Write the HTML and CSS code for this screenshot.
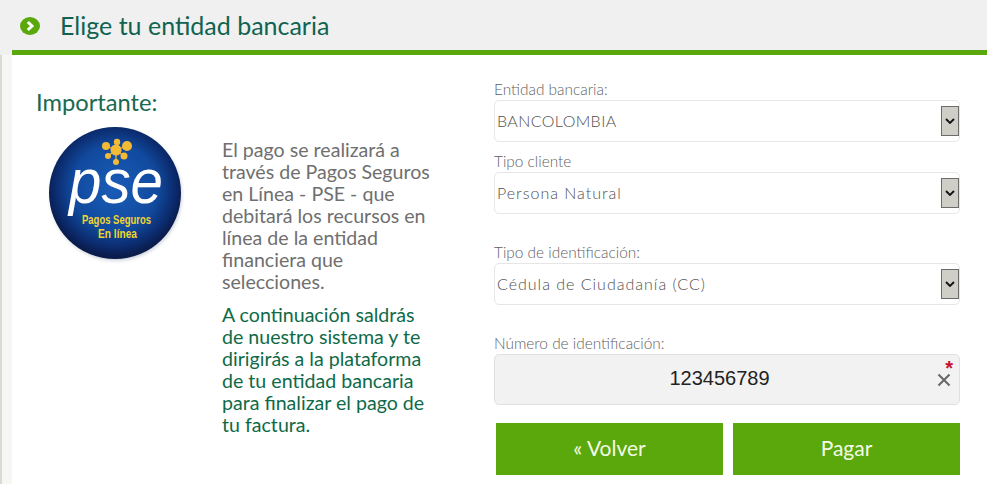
FILE: index.html
```html
<!DOCTYPE html>
<html lang="es">
<head>
<meta charset="utf-8">
<title>Elige tu entidad bancaria</title>
<link rel="stylesheet" href="styles.css">
</head>
<body>
<div class="page">
  <header class="head">
    <svg class="head-icon" width="20" height="18" viewBox="0 0 20 18"><ellipse cx="10" cy="9" rx="10" ry="9" fill="#5aa80c"/><path d="M7.800 5 12 9l-4.200 4" fill="none" stroke="#fff" stroke-width="3"/></svg>
    <h1>Elige tu entidad bancaria</h1>
  </header>
  <main class="content">
    <section class="info">
      <h2>Importante:</h2>
      <div class="info-body">
        <svg class="logo" width="136" height="140" viewBox="0 0 136 140">
          <defs>
            <radialGradient id="g" cx="50%" cy="46%" r="52%">
              <stop offset="0" stop-color="#1a5cb8"/>
              <stop offset=".62" stop-color="#114a9e"/>
              <stop offset=".88" stop-color="#0b2a6c"/>
              <stop offset="1" stop-color="#0a1c4c"/>
            </radialGradient>
            <radialGradient id="s" cx="50%" cy="50%" r="50%">
              <stop offset=".88" stop-color="#a4acbc"/>
              <stop offset="1" stop-color="#fff" stop-opacity="0"/>
            </radialGradient>
          </defs>
          <circle cx="68" cy="70" r="70" fill="url(#s)"/>
          <circle cx="67" cy="68" r="66" fill="url(#g)"/>
          <path d="M68 25 69 17M68 25 58 21M68 25 79 21M68 25 60 31M68 25 76 31M68 25 68 37" stroke="#f3bb35" stroke-width="1.200"/>
          <g fill="#f3bb35">
            <circle cx="69" cy="17" r="3.200"/><circle cx="58" cy="21" r="4"/><circle cx="79" cy="21" r="5"/>
            <circle cx="68" cy="25" r="5.500"/><circle cx="60" cy="31" r="3"/><circle cx="76" cy="31" r="3.500"/><circle cx="68" cy="37" r="3"/>
          </g>
          <text class="logo-pse" x="21" y="78" textLength="94" lengthAdjust="spacingAndGlyphs">pse</text>
          <text class="logo-sub" x="34" y="99" textLength="69" lengthAdjust="spacingAndGlyphs">Pagos Seguros</text>
          <text class="logo-sub" x="50" y="113" textLength="39" lengthAdjust="spacingAndGlyphs">En línea</text>
        </svg>
        <div class="copy">
          <p class="grey">El pago se realizará a<br>través de Pagos Seguros<br>en Línea - PSE - que<br>debitará los recursos en<br>línea de la entidad<br>financiera que<br>selecciones.</p>
          <p class="green">A continuación saldrás<br>de nuestro sistema y te<br>dirigirás a la plataforma<br>de tu entidad bancaria<br>para finalizar el pago de<br>tu factura.</p>
        </div>
      </div>
    </section>
    <section class="form">
      <div class="field">
        <label>Entidad bancaria:</label>
        <div class="select s-caps"><span>BANCOLOMBIA</span><i class="arrow"><svg width="10" height="6" viewBox="0 0 10 6"><path d="M1 1l4 4 4-4" fill="none" stroke="#111" stroke-width="1.800"/></svg></i></div>
      </div>
      <div class="field f2">
        <label>Tipo cliente</label>
        <div class="select"><span>Persona Natural</span><i class="arrow"><svg width="10" height="6" viewBox="0 0 10 6"><path d="M1 1l4 4 4-4" fill="none" stroke="#111" stroke-width="1.800"/></svg></i></div>
      </div>
      <div class="field f3">
        <label>Tipo de identificación:</label>
        <div class="select"><span>Cédula de Ciudadanía (CC)</span><i class="arrow"><svg width="10" height="6" viewBox="0 0 10 6"><path d="M1 1l4 4 4-4" fill="none" stroke="#111" stroke-width="1.800"/></svg></i></div>
      </div>
      <div class="field f3">
        <label>Número de identificación:</label>
        <div class="number">
          <span>123456789</span>
          <b class="req">*</b>
          <svg class="clear" width="14" height="14" viewBox="0 0 14 14"><path d="M1.500 1.500l11 11M12.500 1.500l-11 11" fill="none" stroke="#666" stroke-width="2"/></svg>
        </div>
      </div>
      <div class="actions">
        <button type="button">« Volver</button>
        <button type="button">Pagar</button>
      </div>
    </section>
  </main>
</div>
</body>
</html>
```
FILE: styles.css
```css
* { box-sizing: border-box; }
html, body { margin: 0; height: 484px; overflow: hidden; background: #fff; }
body { font-family: Lato, "Open Sans", sans-serif; }
.page { margin-left: 12px; height: 484px; box-shadow: -10px 0 0 #f6f6f4, -12px 0 0 #dcd8d2; }
.head { height: 55px; margin-left: -12px; padding: 0 0 5px 20px; display: flex; align-items: center; gap: 20px; background: #f0f0f0; position: relative; }
.head::after { content: ""; position: absolute; left: 12px; right: 0; bottom: 0; height: 5px; background: #5aa80c; }
.head-icon { flex: none; margin-top: 2px; }
h1 { margin: 0; font-size: 25px; font-weight: 400; color: #0f6350; }
.content { display: flex; }
.info { width: 482px; padding: 33px 0 0 24px; }
h2 { margin: 0; font-size: 23.7px; line-height: 28px; font-weight: 400; color: #17694f; }
.info-body { display: flex; margin-top: 9px; }
.logo { flex: none; margin-left: 12px; }
.logo-pse { font: italic 400 63px "Liberation Sans", sans-serif; fill: #fff; }
.logo-sub { font: 700 12px "Liberation Sans", sans-serif; fill: #f1d52e; }
.copy { margin-left: 38px; padding-top: 14px; font-size: 19.6px; line-height: 22px; }
.copy p { margin: 0; white-space: nowrap; }
.grey { color: #6f6f6f; }
.copy .green { margin-top: 11px; color: #0f6a48; }
.form { width: 466px; padding-top: 23px; }
label { display: block; font-size: 15.4px; line-height: 22px; font-weight: 300; color: #5f5f5f; }
.field { display: flex; flex-direction: column; }
.f2 { margin-top: 8px; }
.f3 { margin-top: 27px; }
.select { height: 42px; padding: 0 0 2px 2px; border: 1px solid #e6e6e6; border-radius: 5px; display: flex; align-items: center; justify-content: space-between; font-size: 16px; font-weight: 300; letter-spacing: 1px; color: #4f4f4f; }
.s-caps { letter-spacing: .4px; }
.arrow { width: 18px; height: 30px; margin-top: 2px; background: #cfcfc8; border: 1px solid #6b6b6b; display: flex; align-items: center; justify-content: center; }
.number { height: 51px; border: 1px solid #e0e0e0; border-radius: 5px; background: #f2f2f2; display: flex; align-items: center; justify-content: center; padding: 0 15px 3px 0; font: 20px "Liberation Sans", Arial, sans-serif; color: #222; position: relative; }
.req { position: absolute; right: 6px; top: 5px; color: #c8102e; font-size: 20px; line-height: 16px; }
.clear { position: absolute; right: 8px; top: 18px; }
.actions { display: flex; gap: 10px; margin-top: 18px; padding-left: 2px; }
button { flex: 1; height: 52px; border: 0; padding: 0 0 4px; background: #5aa80c; color: #f4fbe6; font: 21px Lato, sans-serif; }
```
